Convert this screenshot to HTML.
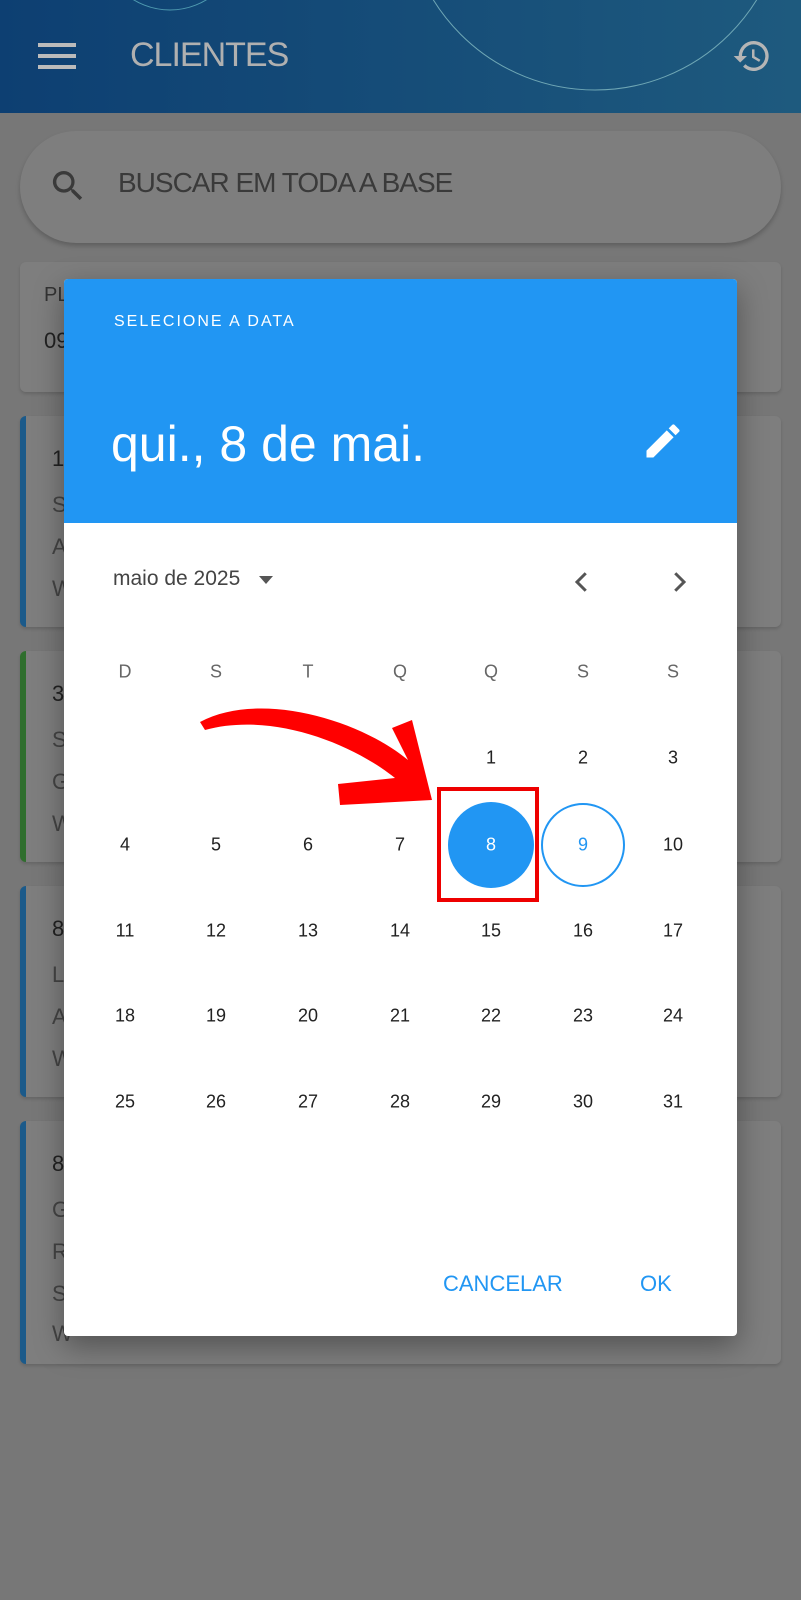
<!DOCTYPE html>
<html><head><meta charset="utf-8"><style>
*{margin:0;padding:0;box-sizing:border-box}
body{width:801px;height:1600px;position:relative;overflow:hidden;background:#777;font-family:"Liberation Sans",sans-serif}
.hdr{position:absolute;left:0;top:0;width:801px;height:113px;background:linear-gradient(90deg,#0d3f72,#1e5a7e);overflow:hidden}
.card{position:absolute;left:20px;width:761px;background:#7e7e7e;border-radius:6px;box-shadow:0 2px 3px rgba(0,0,0,.15)}
.card.b{border-left:6px solid #1b5a8a}
.card.g{border-left:6px solid #2f6e2d}
.card span{position:absolute;left:26px;font-size:22px;color:#444}
.dlg{position:absolute;left:64px;top:279px;width:673px;height:1057px;background:#fff;border-radius:4px;overflow:hidden;box-shadow:0 10px 30px rgba(0,0,0,.35)}
.top{height:244px;background:#2196f3;position:relative;color:#fff}
.n{position:absolute;width:60px;text-align:center;font-size:18px;color:#222;transform:translate(-50%,-50%)}
</style></head><body>
<div class="hdr">
<svg width="801" height="113" style="position:absolute;left:0;top:0"><circle cx="170" cy="-60" r="70" fill="none" stroke="#4f9bb0" stroke-width="1"/><circle cx="595" cy="-100" r="190" fill="none" stroke="#6fa7b5" stroke-width="1"/></svg>
<div style="position:absolute;left:38px;top:43px;width:38px;height:4px;background:#bbb;box-shadow:0 11px 0 #bbb,0 22px 0 #bbb"></div>
<div style="position:absolute;left:130px;top:36px;font-size:34px;color:#b0b0b0;letter-spacing:-1px">CLIENTES</div>
<svg width="40" height="40" viewBox="0 0 24 24" style="position:absolute;left:732px;top:36px"><path fill="#b5b5b5" d="M13 3a9 9 0 0 0-9 9H1l3.9 3.9L9 12H6a7 7 0 1 1 2.05 4.95l-1.42 1.42A9 9 0 1 0 13 3zm-1 5v5l4.25 2.52.77-1.28-3.52-2.09V8z"/></svg>
</div>
<div style="position:absolute;left:20px;top:131px;width:761px;height:112px;border-radius:56px;background:#7e7e7e;box-shadow:0 3px 5px rgba(0,0,0,.2)">
<svg width="40" height="40" viewBox="0 0 24 24" style="position:absolute;left:28px;top:35px"><path fill="#3a3a3a" d="M15.5 14h-.8l-.3-.3A6.5 6.5 0 1 0 9.5 16a6.5 6.5 0 0 0 4.2-1.6l.3.3v.8l5 5 1.5-1.5zm-6 0A4.5 4.5 0 1 1 14 9.5 4.5 4.5 0 0 1 9.5 14z"/></svg>
<div style="position:absolute;left:98px;top:36px;font-size:28px;color:#3a3a3a;letter-spacing:-1px">BUSCAR EM TODA A BASE</div>
</div>
<div class="card" style="top:262px;height:130px"><div style="position:absolute;left:24px;top:22px;color:#333;font-size:20px">PL</div><div style="position:absolute;left:24px;top:66px;color:#222;font-size:22px">09</div></div>
<div class="card b" style="top:416px;height:211px"><span style="top:30px;color:#222">1</span><span style="top:76px">S</span><span style="top:118px">A</span><span style="top:160px">W</span></div>
<div class="card g" style="top:651px;height:211px"><span style="top:30px;color:#222">3</span><span style="top:76px">S</span><span style="top:118px">G</span><span style="top:160px">W</span></div>
<div class="card b" style="top:886px;height:211px"><span style="top:30px;color:#222">8</span><span style="top:76px">L</span><span style="top:118px">A</span><span style="top:160px">W</span></div>
<div class="card b" style="top:1121px;height:243px"><span style="top:30px;color:#222">8</span><span style="top:76px">G</span><span style="top:118px">R</span><span style="top:160px">S</span><span style="top:200px">W</span></div>
<div class="dlg">
<div class="top">
<div style="position:absolute;left:50px;top:34px;font-size:16px;letter-spacing:2px">SELECIONE A DATA</div>
<div style="position:absolute;left:47px;top:136px;font-size:50px">qui., 8 de mai.</div>
<svg width="44" height="44" viewBox="0 0 24 24" style="position:absolute;left:577px;top:140px"><path fill="#fff" d="M3 17.25V21h3.75L17.8 9.94l-3.75-3.75zM20.7 7.04a1 1 0 0 0 0-1.41l-2.34-2.34a1 1 0 0 0-1.41 0l-1.83 1.83 3.75 3.75z"/></svg>
</div>
<div style="position:absolute;left:49px;top:288px;font-size:21px;color:#444">maio de 2025</div>
<div style="position:absolute;left:195px;top:297px;border:7px solid transparent;border-top:8px solid #555;border-bottom:0"></div>
<svg width="30" height="30" viewBox="0 0 24 24" style="position:absolute;left:503px;top:288px"><path fill="none" stroke="#555" stroke-width="2.4" d="M15 5l-7 7 7 7"/></svg>
<svg width="30" height="30" viewBox="0 0 24 24" style="position:absolute;left:600px;top:288px"><path fill="none" stroke="#555" stroke-width="2.4" d="M9 5l7 7-7 7"/></svg>
<div class="n" style="left:61px;top:393px;color:#666">D</div><div class="n" style="left:152px;top:393px;color:#666">S</div><div class="n" style="left:244px;top:393px;color:#666">T</div><div class="n" style="left:336px;top:393px;color:#666">Q</div><div class="n" style="left:427px;top:393px;color:#666">Q</div><div class="n" style="left:519px;top:393px;color:#666">S</div><div class="n" style="left:609px;top:393px;color:#666">S</div>
<div style="position:absolute;left:384px;top:523px;width:86px;height:86px;border-radius:50%;background:#2196f3"></div>
<div style="position:absolute;left:477px;top:524px;width:84px;height:84px;border-radius:50%;border:2px solid #2196f3"></div>
<div class="n" style="left:427px;top:479px">1</div><div class="n" style="left:519px;top:479px">2</div><div class="n" style="left:609px;top:479px">3</div>
<div class="n" style="left:61px;top:566px">4</div><div class="n" style="left:152px;top:566px">5</div><div class="n" style="left:244px;top:566px">6</div><div class="n" style="left:336px;top:566px">7</div><div class="n" style="left:427px;top:566px;color:#fff">8</div><div class="n" style="left:519px;top:566px;color:#2196f3">9</div><div class="n" style="left:609px;top:566px">10</div>
<div class="n" style="left:61px;top:652px">11</div><div class="n" style="left:152px;top:652px">12</div><div class="n" style="left:244px;top:652px">13</div><div class="n" style="left:336px;top:652px">14</div><div class="n" style="left:427px;top:652px">15</div><div class="n" style="left:519px;top:652px">16</div><div class="n" style="left:609px;top:652px">17</div>
<div class="n" style="left:61px;top:737px">18</div><div class="n" style="left:152px;top:737px">19</div><div class="n" style="left:244px;top:737px">20</div><div class="n" style="left:336px;top:737px">21</div><div class="n" style="left:427px;top:737px">22</div><div class="n" style="left:519px;top:737px">23</div><div class="n" style="left:609px;top:737px">24</div>
<div class="n" style="left:61px;top:823px">25</div><div class="n" style="left:152px;top:823px">26</div><div class="n" style="left:244px;top:823px">27</div><div class="n" style="left:336px;top:823px">28</div><div class="n" style="left:427px;top:823px">29</div><div class="n" style="left:519px;top:823px">30</div><div class="n" style="left:609px;top:823px">31</div>
<div style="position:absolute;left:379px;top:992px;font-size:22px;color:#2196f3">CANCELAR</div>
<div style="position:absolute;left:576px;top:992px;font-size:22px;color:#2196f3">OK</div>
</div>
<div style="position:absolute;left:437px;top:787px;width:102px;height:115px;border:4px solid #e00"></div>
<svg width="801" height="1600" style="position:absolute;left:0;top:0">
<path fill="#f00" d="M200 722 C 260 690 360 720 408 760 L 392 728 L 412 720 L 432 800 L 340 805 L 338 784 L 395 778 C 350 742 270 712 205 730 Z"/>
</svg>
</body></html>
